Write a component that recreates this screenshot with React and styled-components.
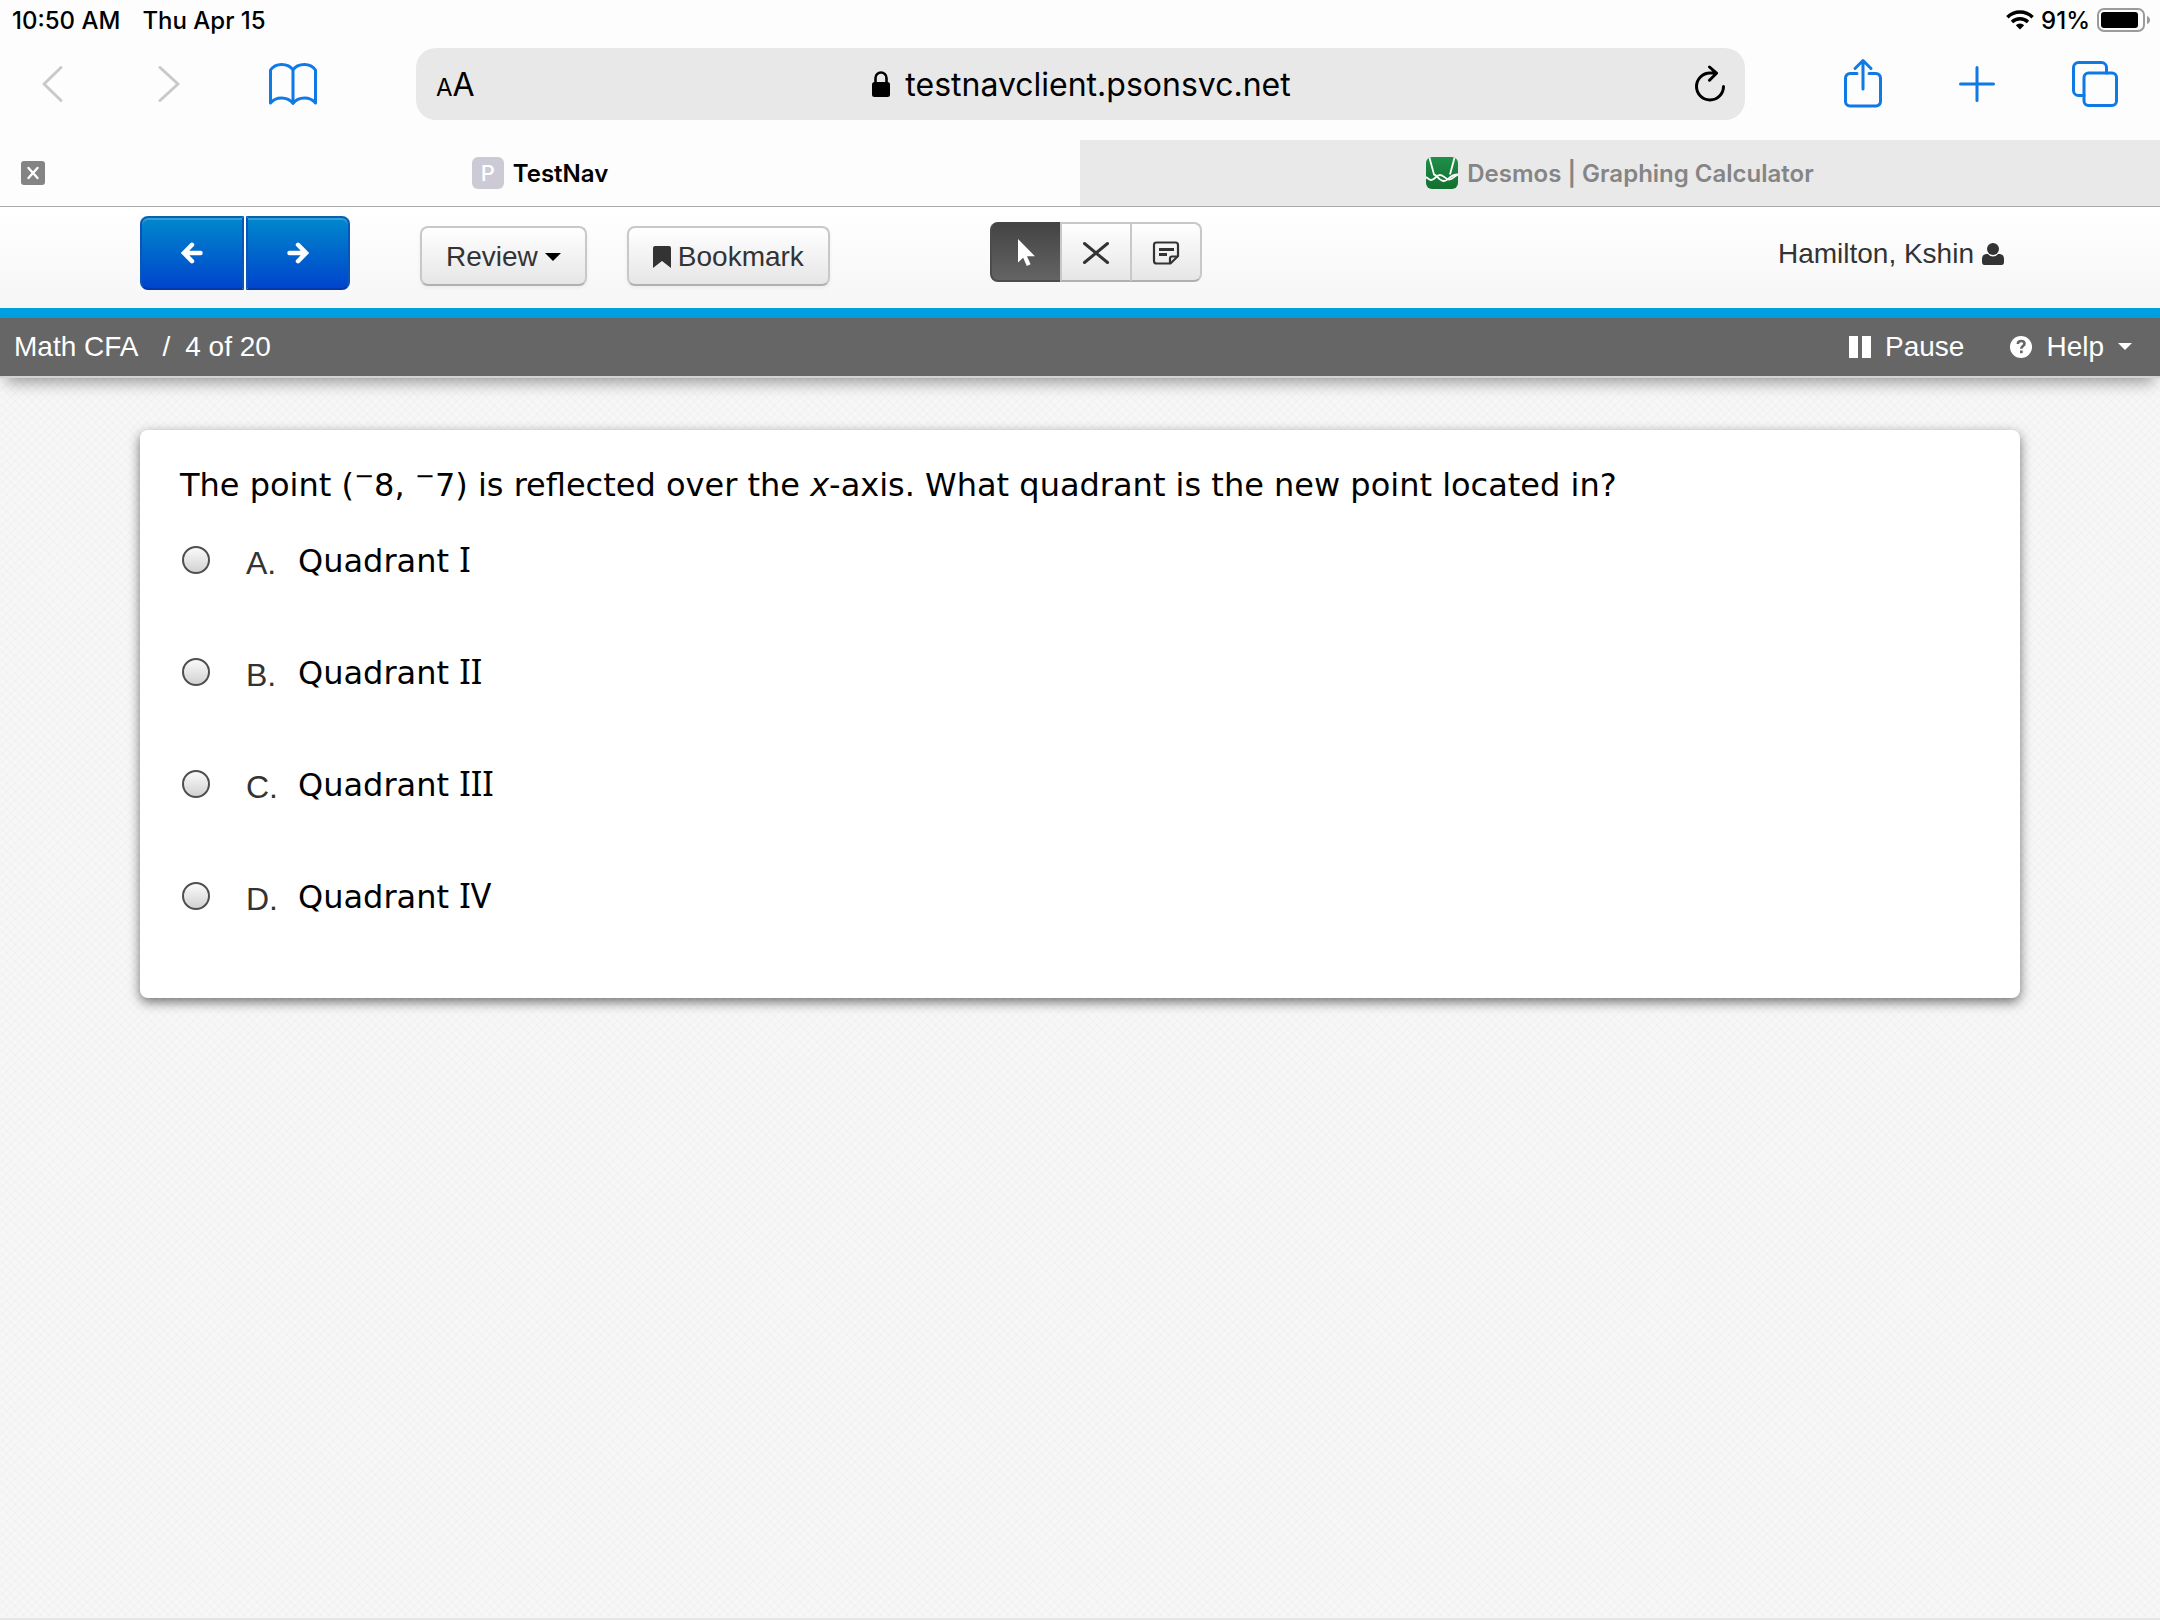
import { useState } from "react";
import styled, { createGlobalStyle, css } from "styled-components";

const choices = [
  { letter: "A", numeral: "I" },
  { letter: "B", numeral: "II" },
  { letter: "C", numeral: "III" },
  { letter: "D", numeral: "IV" },
];

const StatusBar = () => (
  <Status>
    <span>10:50 AM</span>
    <span>Thu Apr 15</span>
    <StatusRight>
      <svg width="28" height="20" viewBox="0 0 28 20">
        <g fill="none" stroke="#000" strokeWidth="3.4">
          <path d="M1.4 7.2a18 18 0 0 1 25.2 0" />
          <path d="M6 12a11.5 11.5 0 0 1 16 0" />
        </g>
        <path d="M14 19.6l-4.2-4.3a6 6 0 0 1 8.4 0z" />
      </svg>
      <span>91%</span>
      <svg width="54" height="24" viewBox="0 0 54 24">
        <rect x="1" y="1" width="46" height="22" rx="6" fill="none" stroke="#9b9b9b" strokeWidth="2" />
        <rect x="4" y="4" width="37" height="16" rx="3" />
        <path d="M50 8q3 1 3 4t-3 4z" fill="#9b9b9b" />
      </svg>
    </StatusRight>
  </Status>
);

const BrowserBar = () => {
  const [url, setUrl] = useState("testnavclient.psonsvc.net");

  return (
    <Toolbar>
      <LeftTools>
        <IconButton aria-label="Back">
          <svg width="24" height="40" viewBox="0 0 24 40">
            <path d="M20 3.5L3 20l17 16.5" stroke="#c9c9cb" />
          </svg>
        </IconButton>
        <IconButton aria-label="Forward">
          <svg width="26" height="40" viewBox="0 0 26 40">
            <path d="M6 3.5L24 20 6 36.5" stroke="#c9c9cb" />
          </svg>
        </IconButton>
        <IconButton aria-label="Bookmarks">
          <svg width="48" height="44" viewBox="0 0 48 44">
            <path d="M24 8C21.500 4 17 2.500 12.500 2.500S4 4.500 1.500 8v33C4 38 8 36 12.500 36s9 2 11.500 5.500C26.500 38 31 36 35.500 36s8.500 2 11 5V8c-2.500-3.500-6.500-5.500-11-5.500S26.500 4 24 8zM24 8v33" />
          </svg>
        </IconButton>
      </LeftTools>
      <AddressBar>
        <TextSizeButton aria-label="Text size">
          <small>A</small>A
        </TextSizeButton>
        <AddressLabel>
          <svg width="20" height="28" viewBox="0 0 20 28">
            <path d="M4.500 13V8a5.500 5.500 0 0 1 11 0v5" fill="none" stroke="#000" strokeWidth="2.600" />
            <rect x="1" y="12" width="18" height="15" rx="2.500" />
          </svg>
          <AddressInput
            aria-label="Address"
            value={url}
            onChange={(e) => setUrl(e.target.value)}
          />
        </AddressLabel>
        <ReloadButton aria-label="Reload">
          <svg width="32" height="38" viewBox="0 0 32 38">
            <path d="M29.500 21.500A13.500 13.500 0 1 1 16 8h6M15.500 2l7 6.200-7 7" />
          </svg>
        </ReloadButton>
      </AddressBar>
      <RightTools>
        <IconButton aria-label="Share">
          <svg width="38" height="52" viewBox="0 0 38 52">
            <path d="M13 15.500H6a4.500 4.500 0 0 0-4.500 4.500v23.500A4.500 4.500 0 0 0 6 48h26a4.500 4.500 0 0 0 4.500-4.500V20a4.500 4.500 0 0 0-4.500-4.500h-7M19 31V2.500M11 10.500l8-8 8 8" />
          </svg>
        </IconButton>
        <IconButton aria-label="New tab">
          <svg width="36" height="36" viewBox="0 0 36 36">
            <path d="M18 1.500v33M1.500 18h33" />
          </svg>
        </IconButton>
        <IconButton aria-label="Show tabs">
          <svg width="46" height="46" viewBox="0 0 46 46">
            <rect x="12" y="12" width="32.500" height="32.500" rx="4.500" />
            <path d="M12 34.500H6.500A5 5 0 0 1 1.500 29.500v-23a5 5 0 0 1 5-5h23a5 5 0 0 1 5 5V12" />
          </svg>
        </IconButton>
      </RightTools>
    </Toolbar>
  );
};

const BrowserTabs = () => (
  <Tabs>
    <Tab $active>
      <CloseButton aria-label="Close tab">
        <svg width="24" height="24" viewBox="0 0 24 24">
          <path d="M7.500 7l9 10M16.500 7l-9 10" stroke="#fff" strokeWidth="2.400" strokeLinecap="round" />
        </svg>
      </CloseButton>
      <TabTitle href="#testnav">
        <Favicon>P</Favicon>
        TestNav
      </TabTitle>
    </Tab>
    <Tab>
      <TabTitle href="#desmos">
        <svg width="32" height="32" viewBox="0 0 32 32">
          <defs>
            <linearGradient id="leaf" x1="0" y1="0" x2="0" y2="1">
              <stop offset="0" stopColor="#1e8f49" />
              <stop offset="1" stopColor="#14702f" />
            </linearGradient>
            <clipPath id="tile">
              <rect width="32" height="32" rx="6" />
            </clipPath>
          </defs>
          <g clipPath="url(#tile)">
            <rect width="32" height="32" fill="url(#leaf)" />
            <g fill="none" stroke="#fff" strokeWidth="1.800">
              <path d="M3 -1L8 17.500c3 .5 5 6.500 10 6.500 4.500 0 5-6.500 14-6.500" />
              <path d="M29 -1l-5 18.500" />
              <path d="M0 20.500c2 0 2.500 2.500 5 2.500 4 0 5-5 9-5s5.500 4.500 9 4.500c4 0 5-3.500 9-5" />
            </g>
          </g>
        </svg>
        Desmos | Graphing Calculator
      </TabTitle>
    </Tab>
  </Tabs>
);

const TestHeader = () => {
  const [tool, setTool] = useState("pointer");

  return (
    <Header>
      <NavGroup>
        <NavButton aria-label="Previous question">
          <svg width="22" height="22" viewBox="0 0 22 22">
            <path d="M19.500 11H5M11 2.800L3 11l8 8.200" />
          </svg>
        </NavButton>
        <NavButton aria-label="Next question">
          <svg width="22" height="22" viewBox="0 0 22 22">
            <path d="M2.500 11H17M11 2.800l8 8.200-8 8.200" />
          </svg>
        </NavButton>
      </NavGroup>
      <ActionGroup>
        <ActionButton aria-haspopup="menu">
          Review
          <svg width="16" height="8" viewBox="0 0 16 8">
            <path d="M0 0h16L8 8z" fill="#000" />
          </svg>
        </ActionButton>
        <ActionButton>
          <svg width="18" height="22" viewBox="0 0 18 22">
            <path d="M2 0h14q2 0 2 2v20l-9-7-9 7V2q0-2 2-2z" fill="#333" />
          </svg>
          Bookmark
        </ActionButton>
      </ActionGroup>
      <ToolGroup>
        <ToolButton
          aria-label="Pointer"
          $selected={tool === "pointer"}
          onClick={() => setTool("pointer")}
        >
          <svg width="20" height="28" viewBox="0 0 20 28">
            <path d="M2 0v23.500l5.200-4.700 3.600 8.200 3.800-1.700-3.600-8H19z" fill="currentColor" />
          </svg>
        </ToolButton>
        <ToolButton
          aria-label="Answer eliminator"
          $selected={tool === "eliminator"}
          onClick={() => setTool("eliminator")}
        >
          <svg width="28" height="24" viewBox="0 0 28 24">
            <path d="M2.500 2.500l23 19M25.500 2.500l-23 19" stroke="currentColor" strokeWidth="3" strokeLinecap="round" />
          </svg>
        </ToolButton>
        <ToolButton
          aria-label="Notepad"
          $selected={tool === "notepad"}
          onClick={() => setTool("notepad")}
        >
          <svg width="28" height="24" viewBox="0 0 28 24" fill="none" stroke="currentColor" strokeWidth="2.200">
            <path d="M4.500 1.500h19q2.500 0 2.500 2.500v11l-7.500 7.500h-14Q2 22.500 2 20V4q0-2.500 2.500-2.500z" />
            <path d="M18 22v-4.500q0-2 2-2h6" />
            <path d="M7 8.500h15M7 13.500h8" strokeWidth="3" />
          </svg>
        </ToolButton>
      </ToolGroup>
      <User>
        Hamilton, Kshin
        <svg width="22" height="22" viewBox="0 0 22 22" fill="#333">
          <circle cx="11" cy="6" r="6" />
          <path d="M0 19v-3q0-4.500 4-5h2q2 2.500 5 2.500t5-2.500h2q4 .5 4 5v3q0 3-2.500 3h-17Q0 22 0 19z" />
        </svg>
      </User>
    </Header>
  );
};

const ProgressBar = () => (
  <Progress>
    <span>Math CFA</span>
    <Slash>/</Slash>
    <span>4 of 20</span>
    <ProgressActions>
      <BarButton>
        <svg width="22" height="22" viewBox="0 0 22 22" fill="#fff">
          <path d="M0 0h9v22H0zM13 0h9v22h-9z" />
        </svg>
        Pause
      </BarButton>
      <BarButton aria-haspopup="menu">
        <svg width="22" height="22" viewBox="0 0 22 22">
          <circle cx="11" cy="11" r="11" fill="#fff" />
          <path d="M7.800 8q.2-3 3.400-3t3.300 2.700c0 2.300-3.200 2.500-3.200 5" fill="none" stroke="#666" strokeWidth="2.600" />
          <path d="M10 14.500h2.700v2.700H10z" fill="#666" />
        </svg>
        Help
        <svg width="14" height="8" viewBox="0 0 14 8">
          <path d="M0 0h14L7 7z" fill="#fff" />
        </svg>
      </BarButton>
    </ProgressActions>
  </Progress>
);

const App = () => {
  const [answer, setAnswer] = useState(null);

  return (
    <Page>
      <GlobalStyle />
      <StatusBar />
      <BrowserBar />
      <BrowserTabs />
      <TestHeader />
      <ProgressBar />
      <Content>
        <Card>
          <Question id="question">
            The point (<Sign>−</Sign>8, <Sign>−</Sign>7) is reflected over the{" "}
            <i>x</i>-axis. What quadrant is the new point located in?
          </Question>
          <Choices role="radiogroup" aria-labelledby="question">
            {choices.map(({ letter, numeral }) => (
              <Choice key={letter}>
                <Radio
                  name="answer"
                  value={letter}
                  checked={answer === letter}
                  onChange={() => setAnswer(letter)}
                />
                <Letter>{letter}.</Letter>
                <span>
                  Quadrant <Numeral>{numeral}</Numeral>
                </span>
              </Choice>
            ))}
          </Choices>
        </Card>
      </Content>
    </Page>
  );
};

const GlobalStyle = createGlobalStyle`
  * {
    box-sizing: border-box;
  }

  body {
    margin: 0;
    background-color: #f7f7f7;
  }

  button, input {
    font: inherit;
    color: inherit;
    margin: 0;
  }

  button {
    cursor: pointer;
  }

  svg {
    display: block;
    flex: none;
  }
`;

const Page = styled.div`
  display: flex;
  flex-direction: column;
  min-height: 100vh;
  font-family: "Liberation Sans", Arial, sans-serif;
  font-size: 28px;
  color: #333;
`;

const Status = styled.div`
  display: flex;
  align-items: center;
  gap: 22px;
  height: 40px;
  padding: 0 9px 0 12px;
  background-color: #fdfdfd;
  color: #000;
  font-family: Inter, sans-serif;
  font-size: 24px;
  font-weight: 500;
`;

const StatusRight = styled.div`
  display: flex;
  align-items: center;
  gap: 7px;
  margin-left: auto;
`;

const Toolbar = styled.div`
  display: flex;
  align-items: center;
  gap: 99px;
  padding: 8px 42px 20px 41px;
  background-color: #fdfdfd;
  font-family: Inter, sans-serif;
`;

const LeftTools = styled.div`
  display: flex;
  align-items: center;
  gap: 89px;
`;

const RightTools = styled.div`
  display: flex;
  align-items: center;
  gap: 77px;
`;

const IconButton = styled.button`
  padding: 0;
  border: none;
  background: none;

  svg {
    fill: none;
    stroke: #0f79e6;
    stroke-width: 3;
    stroke-linecap: round;
    stroke-linejoin: round;
  }
`;

const AddressBar = styled.div`
  flex: 1;
  display: grid;
  grid-template-columns: 1fr auto 1fr;
  align-items: center;
  height: 72px;
  padding: 0 19px 0 20px;
  border-radius: 20px;
  background-color: #e8e8e8;
  color: #000;
`;

const TextSizeButton = styled.button`
  justify-self: start;
  padding: 0;
  border: none;
  background: none;
  font-size: 32px;

  small {
    font-size: 24px;
  }
`;

const AddressLabel = styled.label`
  display: flex;
  align-items: center;
  gap: 14px;
`;

const AddressInput = styled.input`
  field-sizing: content;
  padding: 0;
  border: none;
  outline: none;
  background: none;
  font-size: 32px;
`;

const ReloadButton = styled(IconButton)`
  justify-self: end;

  svg {
    stroke: #000;
  }
`;

const Tabs = styled.div`
  display: flex;
  border-bottom: 1px solid #a9a9a9;
`;

const Tab = styled.div`
  flex: 1;
  display: grid;
  grid-template-columns: 64px 1fr 64px;
  align-items: center;
  height: 66px;
  padding: 0 21px;
  background-color: ${(props) => (props.$active ? "#fdfdfd" : "#e9e9e9")};
  color: ${(props) => (props.$active ? "#000" : "#858585")};
`;

const CloseButton = styled.button`
  justify-self: start;
  padding: 0;
  border: none;
  border-radius: 3px;
  background-color: #848484;
`;

const TabTitle = styled.a`
  grid-column: 2;
  justify-self: center;
  display: flex;
  align-items: center;
  gap: 9px;
  color: inherit;
  text-decoration: none;
  font-family: Inter, sans-serif;
  font-size: 24px;
  font-weight: 600;
`;

const Favicon = styled.span`
  width: 32px;
  height: 32px;
  border-radius: 6px;
  background-color: #cccbd5;
  color: #fff;
  font-size: 22px;
  font-weight: 500;
  line-height: 32px;
  text-align: center;
`;

const Header = styled.header`
  display: flex;
  align-items: flex-start;
  padding: 9px 156px 18px 140px;
  border-bottom: 10px solid #009fdf;
  background: linear-gradient(#fff, #f6f6f6);
`;

const NavGroup = styled.div`
  display: flex;
  gap: 2px;
`;

const NavButton = styled.button`
  display: flex;
  align-items: center;
  justify-content: center;
  width: 104px;
  height: 74px;
  padding: 0;
  border: 2px solid;
  border-color: #0a62ad #0a55b8 #0039ad;
  background: linear-gradient(#0088cc, #0044cc);
  box-shadow: inset 0 2px 0 rgba(255, 255, 255, 0.2);

  &:first-child {
    border-radius: 8px 0 0 8px;
  }

  &:last-child {
    border-radius: 0 8px 8px 0;
  }

  svg {
    fill: none;
    stroke: #fff;
    stroke-width: 4.5;
    stroke-linecap: round;
  }
`;

const raised = css`
  border: 2px solid #c8c8c8;
  border-bottom-color: #b0b0b0;
  background: linear-gradient(#fff, #e6e6e6);
`;

const ActionGroup = styled.div`
  display: flex;
  gap: 40px;
  margin: 10px 160px 0 70px;
`;

const ActionButton = styled.button`
  ${raised}
  display: flex;
  align-items: center;
  gap: 7px;
  height: 60px;
  padding: 2px 24px 0;
  border-radius: 8px;
  box-shadow: 0 2px 4px rgba(0, 0, 0, 0.05);
`;

const ToolGroup = styled.div`
  display: flex;
  margin-top: 6px;
`;

const ToolButton = styled.button`
  ${raised}
  display: flex;
  align-items: center;
  justify-content: center;
  width: 72px;
  height: 60px;
  padding: 2px 0 0;

  & + & {
    margin-left: -2px;
  }

  &:first-child {
    border-radius: 8px 0 0 8px;
  }

  &:last-child {
    border-radius: 0 8px 8px 0;
  }

  ${(props) =>
    props.$selected &&
    css`
      border-color: #444 #4c4c4c #4c4c4c;
      background: linear-gradient(#444, #646464);
      color: #fff;
    `}
`;

const User = styled.div`
  display: flex;
  align-items: center;
  gap: 8px;
  height: 74px;
  padding-top: 2px;
  margin-left: auto;
`;

const Progress = styled.div`
  position: relative;
  display: flex;
  align-items: center;
  height: 60px;
  padding: 0 28px 0 14px;
  border-bottom: 2px solid #d2d2d2;
  background-color: #666;
  box-shadow: 0 10px 16px -6px rgba(0, 0, 0, 0.4);
  color: #fff;
`;

const Slash = styled.span`
  margin: 0 15px 0 24px;
`;

const ProgressActions = styled.div`
  display: flex;
  gap: 46px;
  margin-left: auto;
`;

const BarButton = styled.button`
  display: flex;
  align-items: center;
  gap: 14px;
  padding: 0;
  border: none;
  background: none;
`;

const Content = styled.main`
  flex: 1;
  padding: 52px 140px;
  border-bottom: 2px solid #e6e6e6;
  background-color: #f7f7f7;
  background-image: repeating-linear-gradient(45deg, rgba(0, 0, 0, 0.012) 0 2px, transparent 2px 6px),
    repeating-linear-gradient(-45deg, rgba(0, 0, 0, 0.012) 0 2px, transparent 2px 6px);
`;

const Card = styled.section`
  padding: 35px 40px 76px;
  border-radius: 8px;
  background-color: #fff;
  box-shadow: 0 4px 12px rgba(0, 0, 0, 0.55);
  color: #000;
  font-family: "DejaVu Sans", Verdana, sans-serif;
  font-size: 32px;
  line-height: 40px;
`;

const Question = styled.p`
  margin: 0;
`;

const Sign = styled.sup`
  font-size: 24px;
  line-height: 0;
`;

const Choices = styled.div`
  display: grid;
  gap: 60px;
  margin-top: 29px;
`;

const Choice = styled.label`
  display: flex;
  align-items: center;
  height: 52px;
`;

const Radio = styled.input.attrs({ type: "radio" })`
  appearance: none;
  width: 28px;
  height: 28px;
  margin-left: 2px;
  border: 2px solid #4f4f4f;
  border-radius: 50%;
  background: linear-gradient(#fafafa, #d2d2d2);

  &:checked {
    background: radial-gradient(circle, #333 5px, #e4e4e4 6px);
  }
`;

const Letter = styled.span`
  width: 52px;
  margin-left: 36px;
  padding-top: 6px;
  color: #333;
  font-family: "Liberation Sans", Arial, sans-serif;
`;

const Numeral = styled.span`
  font-family: "Noto Sans", Verdana, sans-serif;
  font-size: 34px;
`;

export default App;
